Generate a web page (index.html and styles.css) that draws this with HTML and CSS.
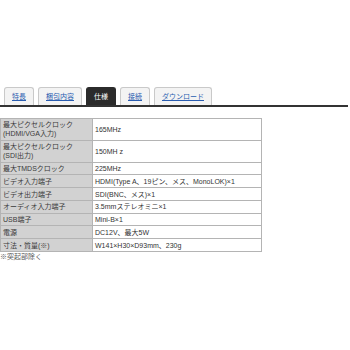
FILE: index.html
```html
<!DOCTYPE html>
<html lang="ja">
<head>
<meta charset="utf-8">
<link rel="stylesheet" href="styles.css">
</head>
<body>
<div class="page">
  <ul class="tabs">
    <li class="tab"><a href="#">特長</a></li>
    <li class="tab"><a href="#">梱包内容</a></li>
    <li class="tab active"><span>仕様</span></li>
    <li class="tab"><a href="#">接続</a></li>
    <li class="tab"><a href="#">ダウンロード</a></li>
  </ul>
  <table class="spec">
    <tr><th>最大ピクセルクロック<br>(HDMI/VGA入力)</th><td>165MHz</td></tr>
    <tr><th>最大ピクセルクロック<br>(SDI出力)</th><td>150MH z</td></tr>
    <tr><th>最大TMDSクロック</th><td>225MHz</td></tr>
    <tr><th>ビデオ入力端子</th><td>HDMI(Type A、19ピン、メス、MonoLOK)×1</td></tr>
    <tr><th>ビデオ出力端子</th><td>SDI(BNC、メス)×1</td></tr>
    <tr><th>オーディオ入力端子</th><td>3.5mmステレオミニ×1</td></tr>
    <tr><th>USB端子</th><td>Mini-B×1</td></tr>
    <tr><th>電源</th><td>DC12V、最大5W</td></tr>
    <tr><th>寸法・質量(※)</th><td>W141×H30×D93mm、230g</td></tr>
  </table>
  <p class="note">※突起部除く</p>
</div>
</body>
</html>
```

FILE: styles.css
```css
html, body {
  margin: 0;
  padding: 0;
  background: #ffffff;
}
body {
  font-family: "Liberation Sans", "Noto Sans CJK JP", sans-serif;
  font-size: 7px;
  color: #333333;
}
.page {
  width: 348px;
  padding-top: 87px;
}
.tabs {
  list-style: none;
  margin: 0;
  padding: 0 0 0 4px;
  display: flex;
  gap: 4px;
  border-bottom: 2px solid #333333;
}
.tab {
  padding: 4px 7px 3px;
  line-height: 10px;
  background: #f3f3f3;
  border: 1px solid #c9c9c9;
  border-bottom: none;
  border-radius: 3px 3px 0 0;
  text-align: center;
}
.tab a {
  color: #2a5db0;
  text-decoration: underline;
}
.tab.active {
  background: #2b2b2b;
  border-color: #2b2b2b;
}
.tab.active span {
  color: #ffffff;
}
.spec {
  margin-top: 11px;
  width: 262px;
  border-collapse: collapse;
  line-height: 9px;
}
.spec th, .spec td {
  border: 1px solid #b4b4b4;
  padding: 1.4px 2px;
  text-align: left;
  vertical-align: middle;
  font-weight: normal;
}
.spec th {
  width: 87px;
  background: #d2d2d2;
  color: #3a3a3a;
}
.spec td {
  background: #ffffff;
  color: #333333;
}
.note {
  margin: 0;
  line-height: 10px;
  color: #555555;
}
```
